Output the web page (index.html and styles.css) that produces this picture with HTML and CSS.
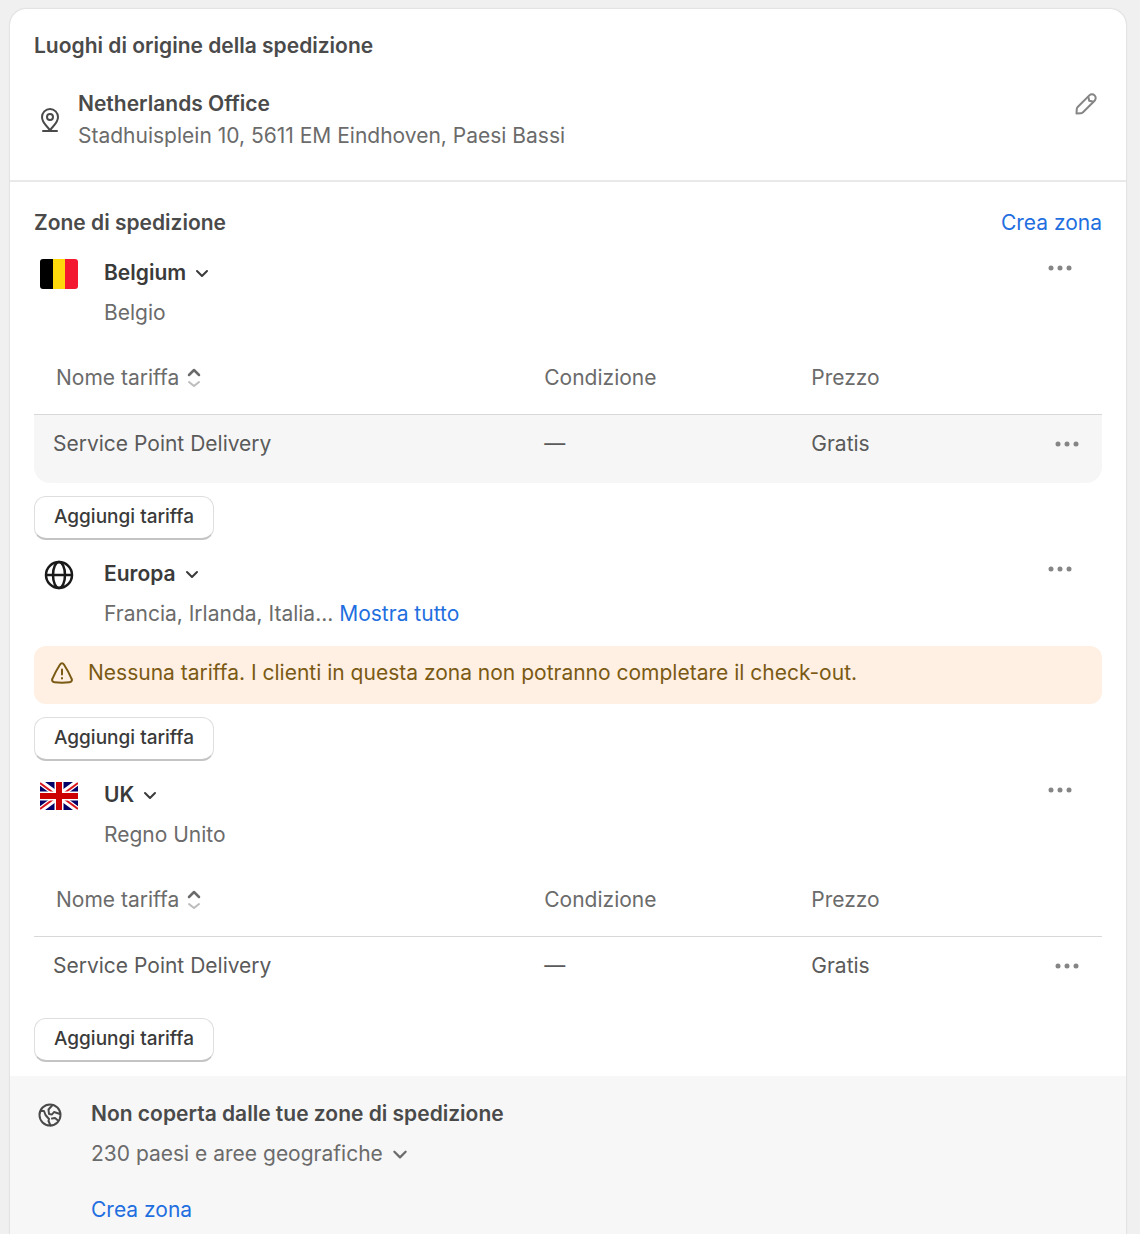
FILE: index.html
```
<!DOCTYPE html>
<html lang="it">
<head>
    <meta charset="UTF-8">
    <meta name="viewport" content="width=device-width, initial-scale=1">
    <title>Spedizione</title>
    <link rel="stylesheet" href="styles.css">
</head>
<body>
    <!-- Shared icons -->
    <svg class="sprite" aria-hidden="true">
        <symbol id="chevron" viewBox="0 0 16 16">
            <path d="M3 6l5 5 5-5" fill="none" stroke="currentColor" stroke-width="2" stroke-linecap="round" stroke-linejoin="round"/>
        </symbol>
        <symbol id="dots" viewBox="0 0 24 6">
            <circle cx="3" cy="3" r="2.500" fill="currentColor"/>
            <circle cx="12" cy="3" r="2.500" fill="currentColor"/>
            <circle cx="21" cy="3" r="2.500" fill="currentColor"/>
        </symbol>
        <symbol id="sort" viewBox="0 0 14 20">
            <g fill="none" stroke="currentColor" stroke-width="2" stroke-linecap="round" stroke-linejoin="round">
                <path d="M2 7l5-5 5 5" stroke-width="2.500"/>
                <path d="M2 14l5 4 5-4" opacity=".45"/>
            </g>
        </symbol>
    </svg>

    <main class="card">
        <section class="origin">
            <h2>Luoghi di origine della spedizione</h2>
            <div class="origin-row">
                <span class="side-icon">
                    <svg width="20" height="26" viewBox="0 0 20 26" fill="none" stroke="currentColor" stroke-width="2" stroke-linecap="round" stroke-linejoin="round">
                        <path d="M10 23.500C8 19.500 2 16.500 2 10a8 8 0 0 1 16 0C18 16.500 12 19.500 10 23.500z"/>
                        <circle cx="10" cy="10" r="3"/>
                        <path d="M3 24h14"/>
                    </svg>
                </span>
                <div class="origin-text">
                    <h3>Netherlands Office</h3>
                    <p>Stadhuisplein 10, 5611 EM Eindhoven, Paesi Bassi</p>
                </div>
                <button class="icon-btn" type="button" aria-label="Modifica">
                    <svg width="24" height="24" viewBox="0 0 24 24" fill="none" stroke="currentColor" stroke-width="2" stroke-linejoin="round">
                        <path d="M2.500 21.500l.3-4.600a3 3 0 0 1 .9-1.900L15.300 3.400a3.700 3.700 0 0 1 5.300 5.300L9 20.300a3 3 0 0 1-1.900.9z"/>
                        <path d="M14.300 4.600l.9 4.200 4.300 1"/>
                    </svg>
                </button>
            </div>
        </section>

        <section class="zones">
            <div class="zones-head">
                <h2>Zone di spedizione</h2>
                <a href="#">Crea zona</a>
            </div>

            <article class="zone">
                <div class="zone-head">
                    <span class="zone-icon">
                        <svg width="38" height="30" viewBox="0 0 38 30">
                            <clipPath id="round"><rect width="38" height="30" rx="3"/></clipPath>
                            <g clip-path="url(#round)">
                                <path d="M0 0h13v30H0z" fill="#000"/>
                                <path d="M13 0h12v30H13z" fill="#ffd90c"/>
                                <path d="M25 0h13v30H25z" fill="#f31830"/>
                            </g>
                        </svg>
                    </span>
                    <div class="zone-text">
                        <button class="zone-name" type="button">Belgium <svg width="16" height="16"><use href="#chevron"/></svg></button>
                        <p>Belgio</p>
                    </div>
                    <button class="icon-btn zone-menu" type="button" aria-label="Altre azioni"><svg width="24" height="6"><use href="#dots"/></svg></button>
                </div>
                <table class="rates">
                    <thead>
                        <tr>
                            <th class="col-name"><button class="sort" type="button">Nome tariffa <svg width="14" height="20"><use href="#sort"/></svg></button></th>
                            <th class="col-cond">Condizione</th>
                            <th class="col-price">Prezzo</th>
                            <th class="col-menu"></th>
                        </tr>
                    </thead>
                    <tbody>
                        <tr class="hovered">
                            <td>Service Point Delivery</td>
                            <td>—</td>
                            <td>Gratis</td>
                            <td class="menu"><button class="icon-btn" type="button" aria-label="Altre azioni"><svg width="24" height="6"><use href="#dots"/></svg></button></td>
                        </tr>
                    </tbody>
                </table>
                <button class="btn" type="button">Aggiungi tariffa</button>
            </article>

            <article class="zone">
                <div class="zone-head">
                    <span class="zone-icon globe">
                        <svg width="30" height="30" viewBox="0 0 30 30" fill="none" stroke="currentColor" stroke-width="2.500">
                            <circle cx="15" cy="15" r="13"/>
                            <ellipse cx="15" cy="15" rx="6" ry="13"/>
                            <path d="M2 15h26"/>
                        </svg>
                    </span>
                    <div class="zone-text">
                        <button class="zone-name" type="button">Europa <svg width="16" height="16"><use href="#chevron"/></svg></button>
                        <p>Francia, Irlanda, Italia... <a href="#">Mostra tutto</a></p>
                    </div>
                    <button class="icon-btn zone-menu" type="button" aria-label="Altre azioni"><svg width="24" height="6"><use href="#dots"/></svg></button>
                </div>
                <div class="banner">
                    <svg width="22" height="22" viewBox="0 0 22 22" fill="none" stroke="currentColor" stroke-width="2" stroke-linecap="round" stroke-linejoin="round">
                        <path d="M9.200 2.300a2.100 2.100 0 0 1 3.600 0c2.900 4.500 5.600 9.500 7.700 14.300a2.400 2.400 0 0 1-2 3.700c-5 .5-10 .5-15 0a2.400 2.400 0 0 1-2-3.700C3.600 11.800 6.300 6.800 9.200 2.300z"/>
                        <path d="M11 7.500v5M11 16v.5"/>
                    </svg>
                    <span>Nessuna tariffa. I clienti in questa zona non potranno completare il check-out.</span>
                </div>
                <button class="btn" type="button">Aggiungi tariffa</button>
            </article>

            <article class="zone">
                <div class="zone-head">
                    <span class="zone-icon">
                        <svg width="38" height="28" viewBox="0 0 38 28">
                            <clipPath id="uk"><rect width="38" height="28"/></clipPath>
                            <g clip-path="url(#uk)">
                                <path d="M0 0h38v28H0z" fill="#006"/>
                                <path d="M0 0l38 28M38 0L0 28" stroke="#fff" stroke-width="6"/>
                                <path d="M0 1l19 14M19 13l19 14M38 1L19 15M19 13L0 27" stroke="#d8141c" stroke-width="2"/>
                                <path d="M19 0v28M0 14h38" stroke="#fff" stroke-width="9"/>
                                <path d="M19 0v28M0 14h38" stroke="#c00" stroke-width="6"/>
                            </g>
                        </svg>
                    </span>
                    <div class="zone-text">
                        <button class="zone-name" type="button">UK <svg width="16" height="16"><use href="#chevron"/></svg></button>
                        <p>Regno Unito</p>
                    </div>
                    <button class="icon-btn zone-menu" type="button" aria-label="Altre azioni"><svg width="24" height="6"><use href="#dots"/></svg></button>
                </div>
                <table class="rates">
                    <thead>
                        <tr>
                            <th class="col-name"><button class="sort" type="button">Nome tariffa <svg width="14" height="20"><use href="#sort"/></svg></button></th>
                            <th class="col-cond">Condizione</th>
                            <th class="col-price">Prezzo</th>
                            <th class="col-menu"></th>
                        </tr>
                    </thead>
                    <tbody>
                        <tr>
                            <td>Service Point Delivery</td>
                            <td>—</td>
                            <td>Gratis</td>
                            <td class="menu"><button class="icon-btn" type="button" aria-label="Altre azioni"><svg width="24" height="6"><use href="#dots"/></svg></button></td>
                        </tr>
                    </tbody>
                </table>
                <button class="btn" type="button">Aggiungi tariffa</button>
            </article>
        </section>

        <section class="uncovered">
            <span class="side-icon">
                <svg width="24" height="24" viewBox="0 0 24 24" fill="none" stroke="currentColor" stroke-width="2" stroke-linejoin="round" stroke-linecap="round">
                    <circle cx="12" cy="12" r="10.500"/>
                    <path d="M3 8h3l1.500 4 3.500 4-.5 2 2 4.500"/>
                    <path d="M14.500 2l-4 4.500.5 4.500 3 .5 2-2.500 6 2"/>
                    <path d="M20 17.500l-3-2.500-3 .5"/>
                </svg>
            </span>
            <div class="uncovered-text">
                <h3>Non coperta dalle tue zone di spedizione</h3>
                <button class="countries" type="button">230 paesi e aree geografiche <svg width="18" height="18"><use href="#chevron"/></svg></button>
                <a href="#">Crea zona</a>
            </div>
        </section>
    </main>
</body>
</html>
```
FILE: styles.css
```
* {
    box-sizing: border-box;
}

body {
    margin: 0;
    padding: 9px 14px 0 10px;
    background-color: #f0f0f0;
    font-family: Inter, "Liberation Sans", sans-serif;
    font-size: 21px;
    line-height: 32px;
    color: #6b6b6b;
}

h2,
h3,
p {
    margin: 0;
    font-size: 21px;
}

h2,
h3 {
    font-weight: 600;
    color: #4a4a4a;
}

a {
    color: #1f6fe0;
    text-decoration: none;
}

a:hover {
    text-decoration: underline;
}

button {
    padding: 0;
    border: none;
    background: none;
    font: inherit;
    color: inherit;
    cursor: pointer;
}

svg {
    display: block;
    flex: none;
}

.sprite {
    display: none;
}

.card {
    background-color: #fff;
    border-radius: 16px 16px 0 0;
    box-shadow: 0 0 2px rgba(0, 0, 0, 0.2);
    overflow: hidden;
}

.origin {
    padding: 21px 24px 28px;
    border-bottom: 2px solid #e9e9e9;
}

.origin-row {
    display: flex;
    gap: 12px;
    margin-top: 26px;
}

.side-icon {
    display: flex;
    flex: none;
    align-items: center;
    justify-content: center;
    width: 32px;
    color: #4a4a4a;
}

.origin-text {
    flex: 1;
}

.icon-btn {
    display: flex;
    flex: none;
    align-items: center;
    justify-content: center;
    width: 32px;
    height: 32px;
    color: #858585;
}

.zones {
    padding: 25px 24px 14px;
}

.zones-head {
    display: flex;
    justify-content: space-between;
    margin-bottom: 18px;
}

.zone + .zone {
    margin-top: 18px;
}

.zone-head {
    display: flex;
    align-items: flex-start;
    gap: 20px;
}

.zone-icon {
    display: flex;
    align-items: center;
    justify-content: center;
    width: 50px;
    height: 34px;
}

.globe {
    color: #1a1a1a;
}

.zone-text {
    flex: 1;
}

.zone-name {
    display: flex;
    align-items: center;
    gap: 8px;
    margin-bottom: 8px;
    font-weight: 600;
    color: #3a3a3a;
}

.zone-menu {
    height: 22px;
    margin-right: 26px;
}

.rates {
    width: 100%;
    table-layout: fixed;
    border-collapse: separate;
    border-spacing: 0;
    text-align: left;
}

.rates th {
    padding: 33px 19px 20px;
    border-bottom: 1px solid #d8d8d8;
    font-weight: 400;
}

.rates th:first-child {
    padding-left: 22px;
}

.rates td {
    padding: 13px 19px 23px;
    color: #5a5a5a;
}

.col-name {
    width: 46%;
}

.col-cond {
    width: 25%;
}

.col-price {
    width: 17%;
}

.sort {
    display: flex;
    align-items: center;
    gap: 8px;
}

.menu .icon-btn {
    margin-left: auto;
}

.hovered td {
    background-color: #f6f6f6;
}

.hovered td:first-child {
    border-bottom-left-radius: 16px;
}

.hovered td:last-child {
    border-bottom-right-radius: 16px;
}

.btn {
    display: block;
    height: 44px;
    margin-top: 13px;
    padding: 0 19px 1px;
    border: 1px solid #dedede;
    border-bottom: 2px solid #c4c4c4;
    border-radius: 12px;
    background-color: #fff;
    font-size: 19px;
    font-weight: 500;
    color: #3a3a3a;
}

.btn:hover {
    background-color: #fafafa;
}

.banner {
    display: flex;
    align-items: center;
    gap: 15px;
    margin-top: 16px;
    padding: 11px 17px 15px;
    border-radius: 12px;
    background-color: #fff0e3;
    color: #7a5a14;
}

.uncovered {
    display: flex;
    align-items: flex-start;
    gap: 25px;
    padding: 22px 24px 8px;
    background-color: #f7f7f7;
}

.uncovered .side-icon {
    height: 34px;
}

.countries {
    display: flex;
    align-items: center;
    gap: 8px;
    margin: 8px 0 24px;
}
```
